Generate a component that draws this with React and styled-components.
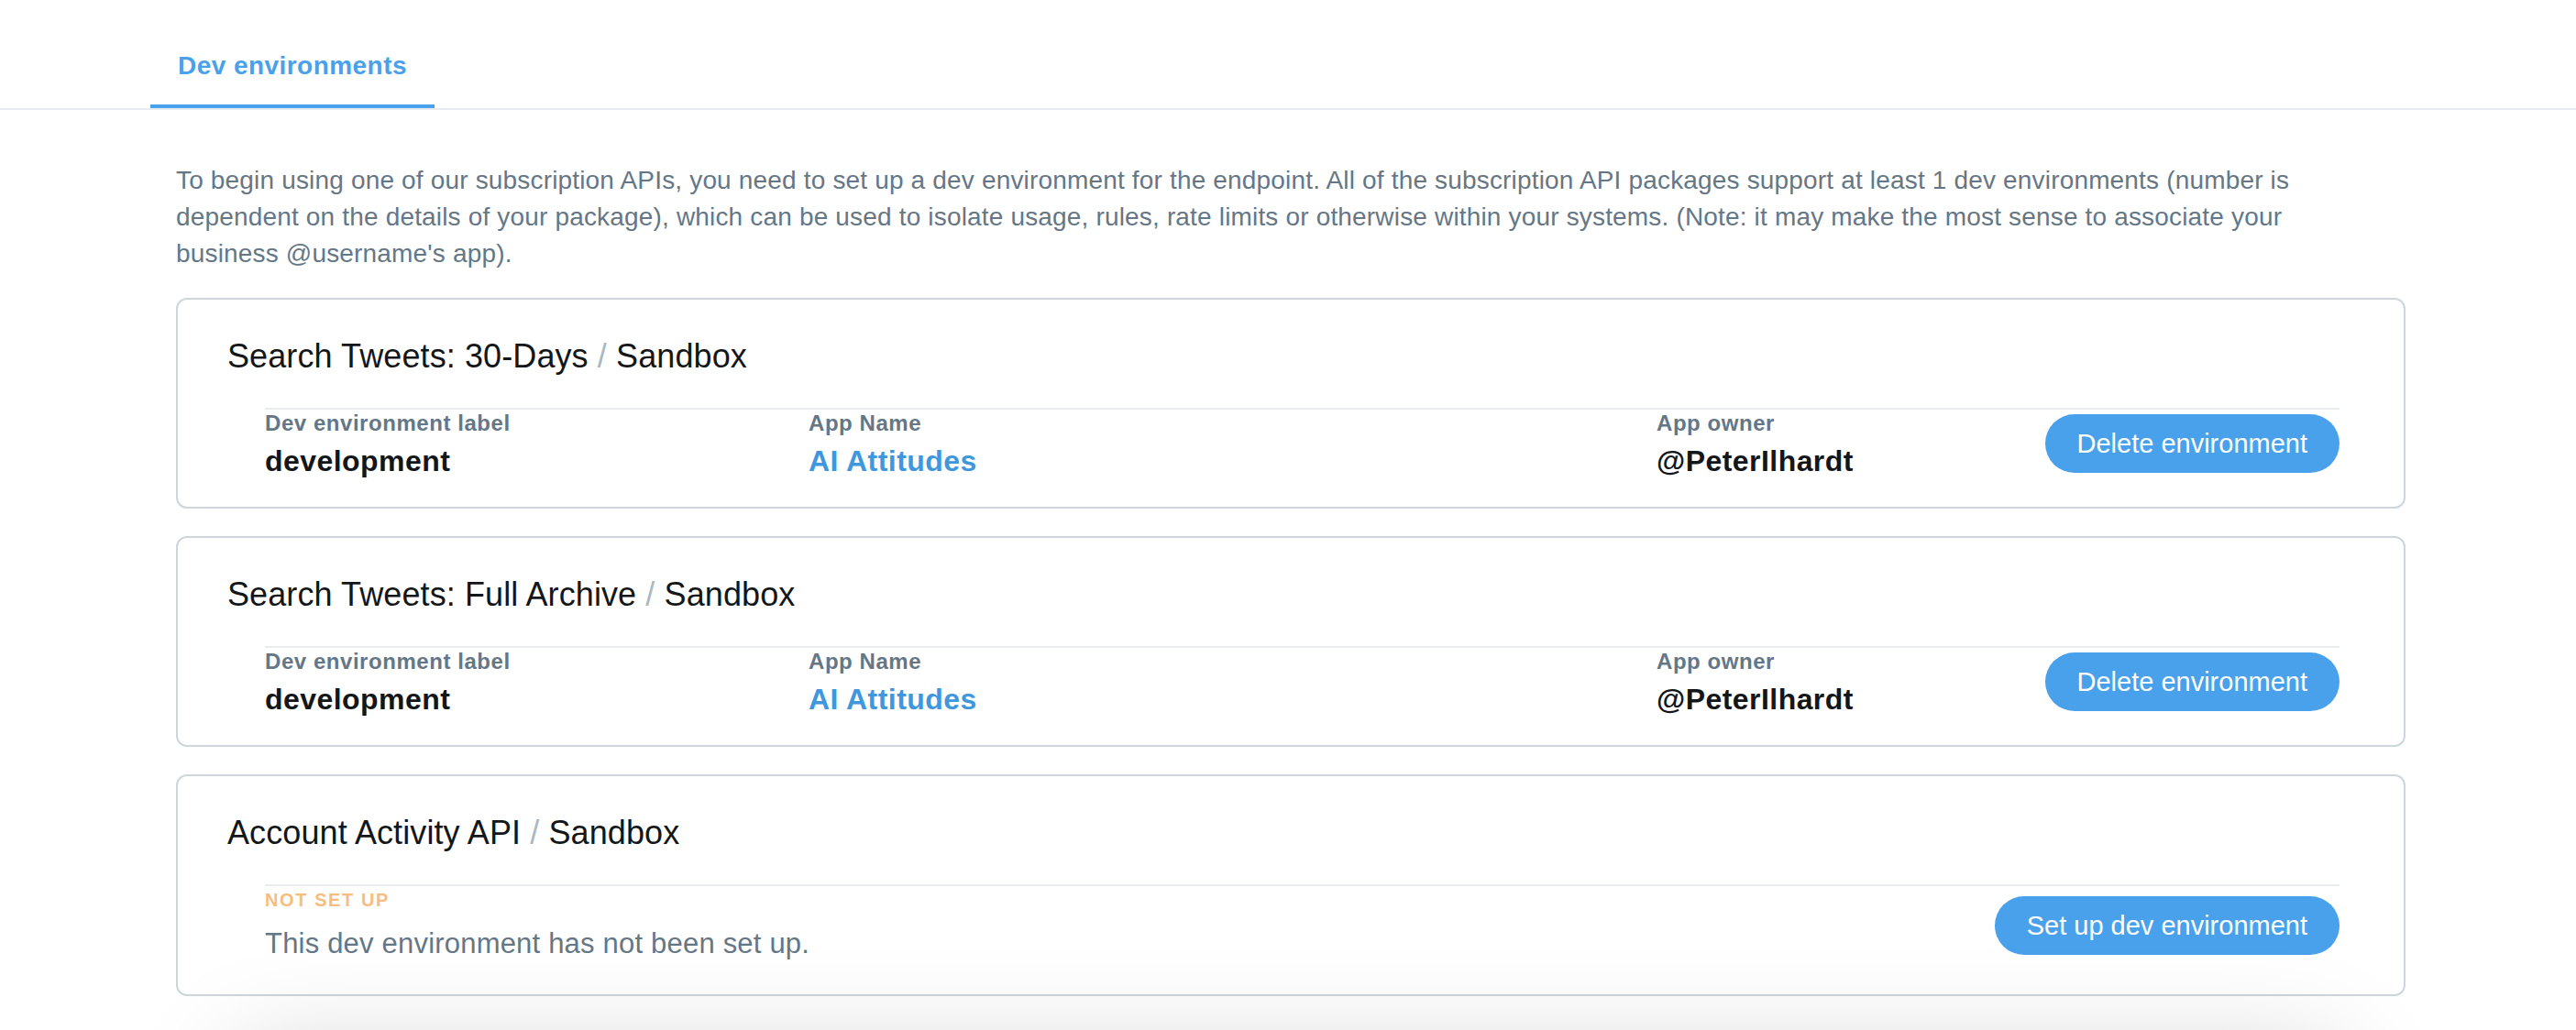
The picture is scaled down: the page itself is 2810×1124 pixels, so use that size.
import React from "react";
import styled, { createGlobalStyle } from "styled-components";

const GlobalStyle = createGlobalStyle`
  html, body {
    margin: 0;
    padding: 0;
    background: #ffffff;
  }
  body {
    font-family: "Liberation Sans", Arial, Helvetica, sans-serif;
    color: #14171a;
    -webkit-font-smoothing: antialiased;
  }
  * { box-sizing: border-box; }
`;

const Page = styled.div`
  min-height: 1124px;
  overflow: hidden;
  position: relative;
`;

const TabBar = styled.nav`
  display: flex;
  padding-left: 164px;
  border-bottom: 2px solid #e6ecf0;
`;

const Tab = styled.div`
  padding: 52px 30px 22px 30px;
  line-height: 40px;
  font-size: 28px;
  font-weight: 700;
  letter-spacing: 0.45px;
  color: ${(p) => (p.$active ? "#4aa1eb" : "#657786")};
  border-bottom: 4px solid ${(p) => (p.$active ? "#4aa1eb" : "transparent")};
`;

const Content = styled.main`
  width: 2432px;
  margin-left: 192px;
  padding-top: 57px;
`;

const Intro = styled.p`
  margin: 0 0 28px 0;
  font-size: 28px;
  line-height: 40px;
  letter-spacing: 0.17px;
  color: #657786;
`;

const Card = styled.section`
  border: 2px solid #ccd6dd;
  border-radius: 12px;
  background: #ffffff;
  padding: 38px 70px 32px 54px;
  & + & {
    margin-top: 30px;
  }
`;

const Title = styled.h2`
  margin: 0;
  font-size: 36px;
  line-height: 48px;
  font-weight: 400;
  letter-spacing: 0.1px;
  color: #14171a;
`;

const Slash = styled.span`
  color: #aab8c2;
`;

const DetailRow = styled.div`
  display: flex;
  align-items: center;
  margin: 32px 0 0 41px;
  border-top: 2px solid #e6ecf0;
`;

const Fields = styled.div`
  flex: 1;
  display: grid;
  grid-template-columns: 593px 925px 1fr;
`;

const Field = styled.div`
  display: flex;
  flex-direction: column;
`;

const Label = styled.div`
  font-size: 24px;
  line-height: 30px;
  font-weight: 700;
  letter-spacing: 0.55px;
  color: #657786;
`;

const Value = styled.div`
  margin-top: 8px;
  font-size: 32px;
  line-height: 36px;
  font-weight: 700;
  letter-spacing: 0.45px;
  color: ${(p) => (p.$link ? "#3f97de" : "#14171a")};
`;

const Pending = styled.div`
  flex: 1;
  display: flex;
  flex-direction: column;
`;

const Status = styled.div`
  font-size: 20px;
  line-height: 30px;
  font-weight: 700;
  letter-spacing: 1.6px;
  color: #f7bd7f;
  text-transform: uppercase;
`;

const Note = styled.div`
  margin: 13px 0 3px 0;
  font-size: 31px;
  line-height: 40px;
  letter-spacing: 0.2px;
  color: #657786;
`;

const PillButton = styled.button`
  height: 64px;
  padding: 0 35px;
  border: none;
  border-radius: 32px;
  background: #4aa1eb;
  color: #ffffff;
  font-family: "Liberation Sans", Arial, Helvetica, sans-serif;
  font-size: 29px;
  letter-spacing: 0;
  white-space: nowrap;
  cursor: pointer;
`;

const FooterShade = styled.div`
  position: fixed;
  left: 260px;
  right: 260px;
  top: 1150px;
  height: 200px;
  box-shadow: 0 0 120px 0 rgba(0, 0, 0, 0.18);
  pointer-events: none;
`;

const environments = [
  {
    product: "Search Tweets: 30-Days",
    tier: "Sandbox",
    label: "development",
    app: "AI Attitudes",
    owner: "@PeterIlhardt",
  },
  {
    product: "Search Tweets: Full Archive",
    tier: "Sandbox",
    label: "development",
    app: "AI Attitudes",
    owner: "@PeterIlhardt",
  },
  {
    product: "Account Activity API",
    tier: "Sandbox",
  },
];

function EnvCard({ env }) {
  return (
    <Card>
      <Title>
        {env.product} <Slash>/</Slash> {env.tier}
      </Title>
      {env.label ? (
        <DetailRow>
          <Fields>
            <Field>
              <Label>Dev environment label</Label>
              <Value>{env.label}</Value>
            </Field>
            <Field>
              <Label>App Name</Label>
              <Value $link>{env.app}</Value>
            </Field>
            <Field>
              <Label>App owner</Label>
              <Value>{env.owner}</Value>
            </Field>
          </Fields>
          <PillButton>Delete environment</PillButton>
        </DetailRow>
      ) : (
        <DetailRow>
          <Pending>
            <Status>Not set up</Status>
            <Note>This dev environment has not been set up.</Note>
          </Pending>
          <PillButton>Set up dev environment</PillButton>
        </DetailRow>
      )}
    </Card>
  );
}

export default function App() {
  return (
    <>
      <GlobalStyle />
      <Page>
        <TabBar>
          <Tab $active>Dev environments</Tab>
        </TabBar>
        <Content>
          <Intro>
            To begin using one of our subscription APIs, you need to set up a dev
            environment for the endpoint. All of the subscription API packages
            support at least 1 dev environments (number is dependent on the details
            of your package), which can be used to isolate usage, rules, rate limits
            or otherwise within your systems. (Note: it may make the most sense to
            associate your
            <br />
            business @username's app).
          </Intro>
          {environments.map((env) => (
            <EnvCard key={env.product} env={env} />
          ))}
        </Content>
        <FooterShade />
      </Page>
    </>
  );
}
